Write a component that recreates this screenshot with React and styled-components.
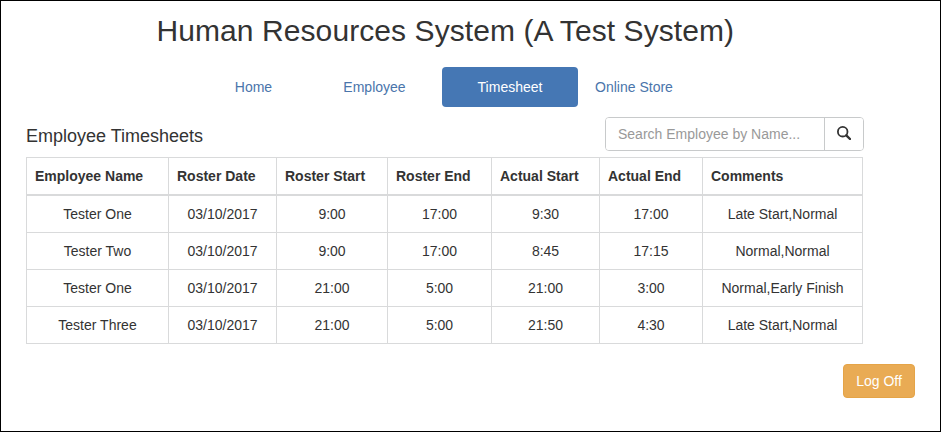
import React from "react";
import styled, { createGlobalStyle } from "styled-components";

const GlobalStyle = createGlobalStyle`
  *, *::before, *::after { box-sizing: border-box; }
  body {
    margin: 0;
    background: #fff;
    color: #333;
    font: 14px/20px "Liberation Sans", Arial, sans-serif;
  }
`;

const Page = styled.div`
  width: 941px;
  height: 432px;
  border: 1px solid #000;
  padding: 13px 25px 0;
  overflow: hidden;
`;

const Title = styled.h1`
  margin: 0 0 0 130.5px;
  font-size: 30px;
  line-height: 33px;
  font-weight: 400;
  letter-spacing: 0.08px;
  white-space: nowrap;
`;

const Nav = styled.nav`
  display: flex;
  gap: 2px;
  margin: 20px 0 0 174px;
`;

const NavLink = styled.a`
  width: ${(p) => p.$width}px;
  height: 40px;
  line-height: 40px;
  border-radius: 4px;
  text-align: center;
  text-decoration: none;
  white-space: nowrap;
  color: ${(p) => (p.$active ? "#fff" : "#4a75ab")};
  background: ${(p) => (p.$active ? "#4577b4" : "transparent")};
`;

const Toolbar = styled.div`
  display: flex;
  justify-content: space-between;
  align-items: flex-start;
  width: 838px;
  height: 50px;
  padding-top: 10px;
`;

const SectionTitle = styled.h2`
  margin: 9px 0 0;
  font-size: 18px;
  line-height: 20px;
  font-weight: 400;
  white-space: nowrap;
`;

const SearchGroup = styled.form`
  display: flex;
  width: 259px;
  height: 34px;
  border: 1px solid #c8cacb;
  border-radius: 4px;
  overflow: hidden;
`;

const SearchInput = styled.input`
  flex: 1;
  min-width: 0;
  border: 0;
  padding: 0 12px;
  outline: 0;
  background: #fff;
  font: inherit;
  color: #555;
  &::placeholder { color: #999; opacity: 1; }
`;

const SearchButton = styled.button`
  display: flex;
  align-items: center;
  justify-content: center;
  width: 39px;
  padding: 0 0 2px;
  border: 0;
  border-left: 1px solid #c8cacb;
  background: #fff;
  color: #333;
`;

const Table = styled.table`
  width: 837px;
  table-layout: fixed;
  border-collapse: separate;
  border-spacing: 0;
  border: solid #d9dadb;
  border-width: 1px 0 0 1px;
`;

const HeadCell = styled.th`
  height: 38px;
  padding: 0 8px;
  border: solid #d9dadb;
  border-width: 0 1px 2px 0;
  text-align: left;
  white-space: nowrap;
`;

const Cell = styled.td`
  height: 37px;
  padding: 0;
  border: solid #d9dadb;
  border-width: 0 1px 1px 0;
  text-align: center;
  white-space: nowrap;
`;

const Column = styled.col`
  width: ${(p) => p.$width}px;
`;

const Footer = styled.div`
  display: flex;
  justify-content: flex-end;
  padding-top: 20px;
`;

const LogOff = styled.button`
  width: 72px;
  height: 34px;
  padding: 0;
  border: 1px solid #e5a447;
  border-radius: 4px;
  background: #e9ab54;
  color: #fff;
  font: inherit;
`;

const links = [
  { label: "Home", width: 107 },
  { label: "Employee", width: 131 },
  { label: "Timesheet", width: 136, active: true },
  { label: "Online Store", width: 108 },
];

const columns = [
  ["Employee Name", 142],
  ["Roster Date", 108],
  ["Roster Start", 111],
  ["Roster End", 104],
  ["Actual Start", 108],
  ["Actual End", 103],
  ["Comments", 160],
];

const rows = [
  ["Tester One", "03/10/2017", "9:00", "17:00", "9:30", "17:00", "Late Start,Normal"],
  ["Tester Two", "03/10/2017", "9:00", "17:00", "8:45", "17:15", "Normal,Normal"],
  ["Tester One", "03/10/2017", "21:00", "5:00", "21:00", "3:00", "Normal,Early Finish"],
  ["Tester Three", "03/10/2017", "21:00", "5:00", "21:50", "4:30", "Late Start,Normal"],
];

function SearchIcon() {
  return (
    <svg width="14" height="14" viewBox="0 0 14 14" fill="none" stroke="currentColor" aria-hidden="true">
      <circle cx="5.7" cy="5.7" r="4.8" strokeWidth="1.8" />
      <path d="M9.3 9.3 13 13" strokeWidth="2.4" strokeLinecap="round" />
    </svg>
  );
}

export default function App() {
  return (
    <>
      <GlobalStyle />
      <Page>
        <Title>Human Resources System (A Test System)</Title>
        <Nav>
          {links.map((l) => (
            <NavLink key={l.label} href="#" $width={l.width} $active={l.active}>
              {l.label}
            </NavLink>
          ))}
        </Nav>
        <Toolbar>
          <SectionTitle>Employee Timesheets</SectionTitle>
          <SearchGroup>
            <SearchInput placeholder="Search Employee by Name..." />
            <SearchButton type="button" aria-label="Search">
              <SearchIcon />
            </SearchButton>
          </SearchGroup>
        </Toolbar>
        <Table>
          <colgroup>
            {columns.map(([name, width]) => (
              <Column key={name} $width={width} />
            ))}
          </colgroup>
          <thead>
            <tr>
              {columns.map(([name]) => (
                <HeadCell key={name}>{name}</HeadCell>
              ))}
            </tr>
          </thead>
          <tbody>
            {rows.map((row, i) => (
              <tr key={i}>
                {row.map((value, j) => (
                  <Cell key={j}>{value}</Cell>
                ))}
              </tr>
            ))}
          </tbody>
        </Table>
        <Footer>
          <LogOff type="button">Log Off</LogOff>
        </Footer>
      </Page>
    </>
  );
}
